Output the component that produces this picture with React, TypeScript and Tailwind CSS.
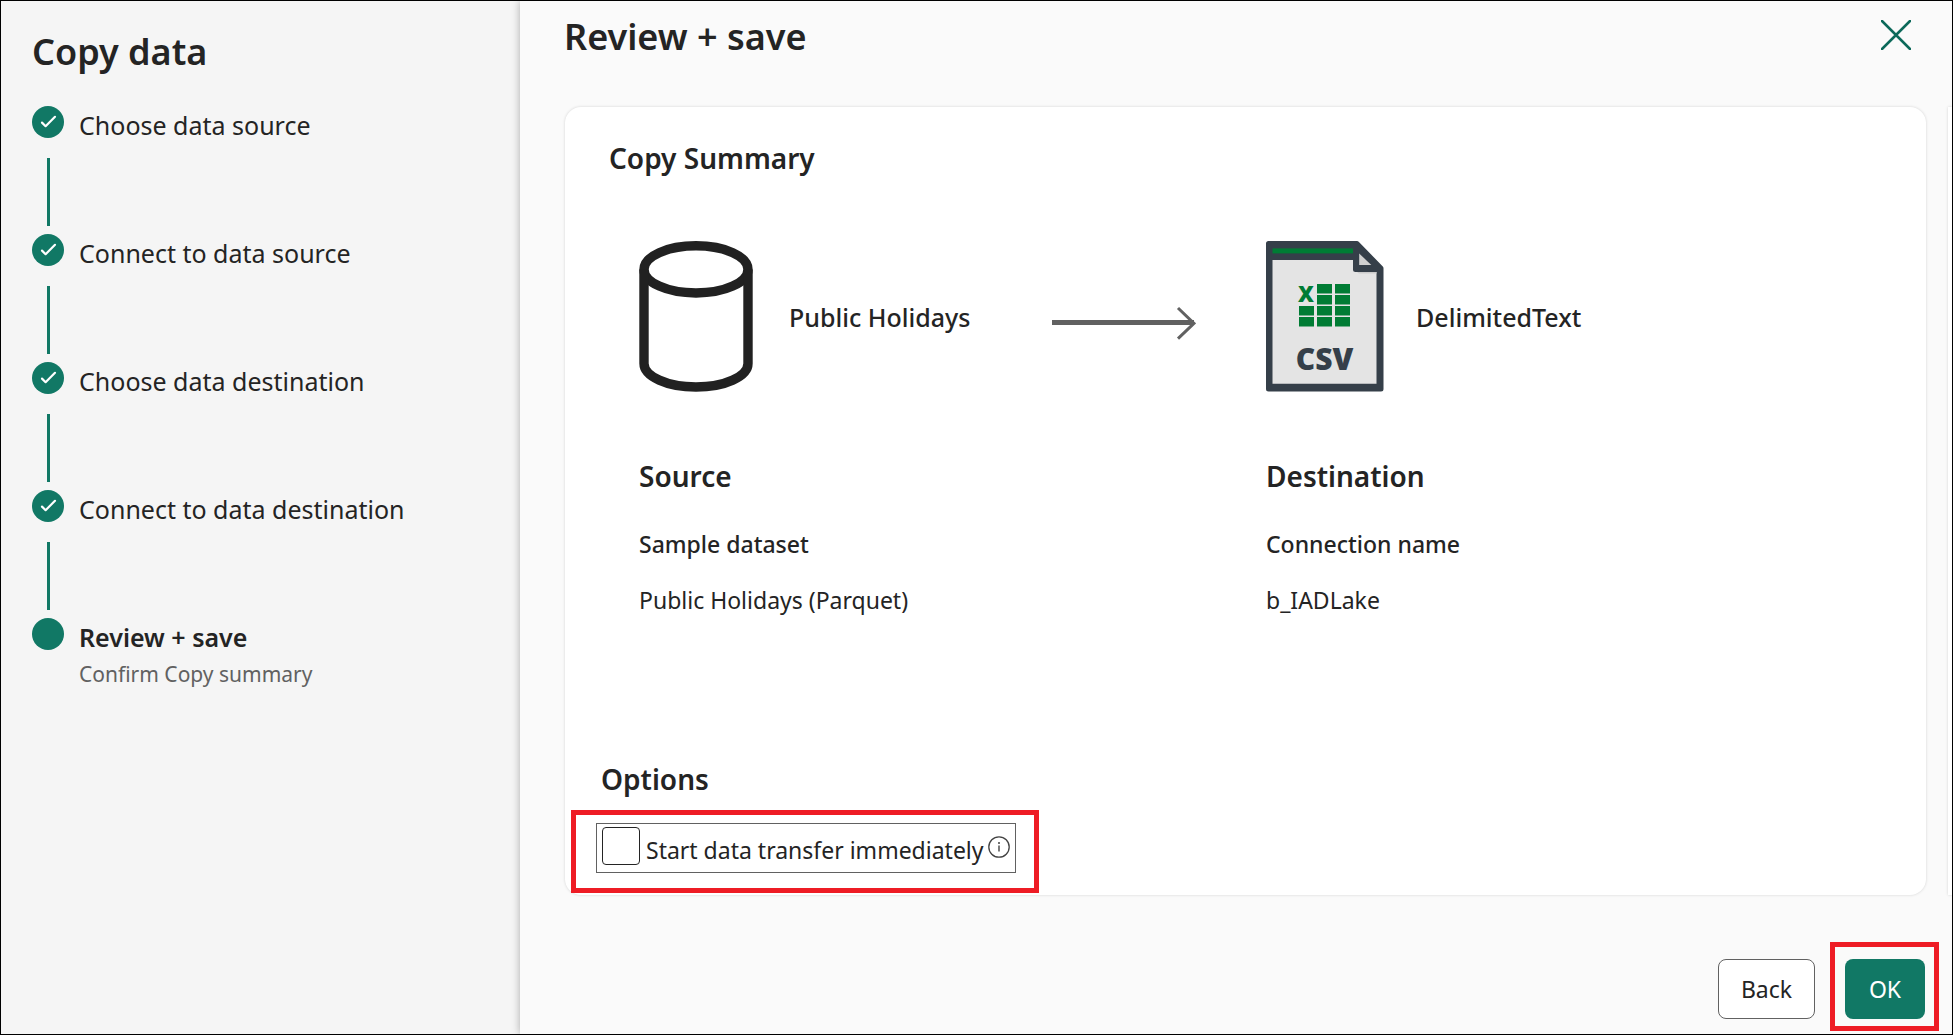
const completedSteps = [
  'Choose data source',
  'Connect to data source',
  'Choose data destination',
  'Connect to data destination',
]

function CheckMark() {
  return (
    <svg viewBox="0 0 32 32" className="size-8" fill="none" aria-hidden="true">
      <path
        d="M10 16.6 L13.6 20.2 L23 10.8"
        stroke="white"
        strokeWidth="2.2"
        strokeLinecap="round"
        strokeLinejoin="round"
      />
    </svg>
  )
}

function DatabaseIcon() {
  return (
    <svg viewBox="0 0 118 151" className="h-[151px] w-[118px] shrink-0" fill="none" aria-hidden="true">
      <g stroke="#212121" strokeWidth="9.4">
        <ellipse cx="57" cy="28.4" rx="52" ry="23.6" />
        <path d="M5 28.4 V122.5 C5 135.5 28.3 146 57 146 S109 135.5 109 122.5 V28.4" />
      </g>
    </svg>
  )
}

function ArrowIcon() {
  return (
    <svg viewBox="0 0 144 47" className="h-[47px] w-36 shrink-0" fill="none" aria-hidden="true">
      <path d="M0 29.5 H142" stroke="#616161" strokeWidth="5" />
      <path d="M126 15 L142 30.3 L126 45.6" stroke="#616161" strokeWidth="3" />
    </svg>
  )
}

const sheetCells = [
  [51, 43], [69, 43],
  [51, 54], [69, 54],
  [33, 65], [51, 65], [69, 65],
  [33, 76], [51, 76], [69, 76],
]

function CsvIcon() {
  return (
    <svg viewBox="0 0 118 151" className="h-[151px] w-[118px] shrink-0" role="img" aria-label="CSV file">
      <path
        d="M2.5 0 H91 Q92 0 92.7 0.8 L116.8 25.4 Q117.5 26.2 117.5 27.2 V148 Q117.5 150.5 115 150.5 H2.5 Q0 150.5 0 148 V2.5 Q0 0 2.5 0 Z"
        fill="#353f49"
      />
      <path d="M6.5 19 H87 V28.5 Q87 31 89.5 31 H110.5 V142.8 H6.5 Z" fill="#e4e4e4" />
      <path d="M93.2 12.5 V24 H105.3 Z" fill="#d0d0d0" />
      <path d="M91 31 H110.5 V32.4 H93 Z" fill="#cbcbcb" />
      <rect x="6.5" y="7.4" width="80.5" height="5" fill="#007c34" />
      {sheetCells.map(([x, y]) => (
        <rect key={`${x}-${y}`} x={x} y={y} width="15" height="9.5" fill="#007c34" />
      ))}
      <text
        x="40"
        y="60.5"
        textAnchor="middle"
        fill="#007c34"
        className="font-['Open_Sans',sans-serif] text-[22px] font-extrabold"
      >
        X
      </text>
      <text
        x="58.5"
        y="128.5"
        textAnchor="middle"
        fill="#353f49"
        className="font-['Open_Sans',sans-serif] text-[30px] font-extrabold"
      >
        CSV
      </text>
    </svg>
  )
}

function InfoIcon() {
  return (
    <svg viewBox="0 0 22 22" className="size-[22px] shrink-0" fill="none" aria-hidden="true">
      <circle cx="11" cy="11" r="10.2" stroke="#424242" strokeWidth="1.3" />
      <path d="M11 9.5 V15.5" stroke="#424242" strokeWidth="1.4" />
      <circle cx="11" cy="7" r="1" fill="#424242" />
    </svg>
  )
}

function Details({ title, label, value }: { title: string; label: string; value: string }) {
  return (
    <div className="mt-16">
      <h3 className="text-[28px] leading-10 font-semibold">{title}</h3>
      <p className="mt-8 text-[23px] leading-8 font-medium">{label}</p>
      <p className="mt-6 text-[23px] leading-8">{value}</p>
    </div>
  )
}

function Sidebar() {
  return (
    <aside className="w-[519px] shrink-0 bg-[#f5f5f5] pt-[27px] pl-[31px]">
      <h1 className="mb-[30px] text-[36px] leading-[48px] font-semibold">Copy data</h1>
      <ol>
        {completedSteps.map((step) => (
          <li key={step} className="flex items-start gap-[15px]">
            <div className="w-8">
              <div className="size-8 rounded-full bg-[#117865]">
                <CheckMark />
              </div>
              <div className="mt-5 mb-2 ml-[15px] h-17 w-[3px] bg-[#117865]" />
            </div>
            <span className="mt-px text-[25px] leading-9">{step}</span>
          </li>
        ))}
        <li className="flex items-start gap-[15px]" aria-current="step">
          <div className="size-8 rounded-full bg-[#117865]" />
          <div className="mt-px">
            <p className="text-[25px] leading-9 font-semibold">Review + save</p>
            <p className="mt-1 text-[21px] leading-[30px] text-[#616161]">Confirm Copy summary</p>
          </div>
        </li>
      </ol>
    </aside>
  )
}

function Summary() {
  return (
    <section className="flex-1 rounded-2xl bg-white pt-[31px] pb-[22px] shadow-[0_0_3px_rgba(0,0,0,0.16)]">
      <h2 className="pl-11 text-[28px] leading-10 font-semibold">Copy Summary</h2>

      <div className="mt-[63px] grid grid-cols-2 pr-[33px] pl-[74px]">
        <div>
          <div className="flex items-center">
            <DatabaseIcon />
            <span className="ml-8 text-[25px] leading-9 font-medium whitespace-nowrap">
              Public Holidays
            </span>
            <div className="ml-[82px]">
              <ArrowIcon />
            </div>
          </div>
          <Details title="Source" label="Sample dataset" value="Public Holidays (Parquet)" />
        </div>
        <div>
          <div className="flex items-center">
            <CsvIcon />
            <span className="ml-8 text-[25px] leading-9 font-medium">DelimitedText</span>
          </div>
          <Details title="Destination" label="Connection name" value="b_IADLake" />
        </div>
      </div>

      <h3 className="mt-[143px] pl-9 text-[28px] leading-10 font-semibold">Options</h3>
      <div className="relative mt-6 ml-[31px] w-fit">
        <div className="flex h-[50px] items-start border border-[#616161] px-[5px]">
          <input
            id="start-transfer"
            type="checkbox"
            className="mt-[3px] size-[38px] appearance-none rounded-[4px] border border-[#242424] bg-white checked:bg-[#117865]"
          />
          <label htmlFor="start-transfer" className="mt-[10px] ml-[6px] text-[23px] leading-8 whitespace-nowrap">
            Start data transfer immediately
          </label>
          <button type="button" aria-label="More information" className="mt-3 ml-1">
            <InfoIcon />
          </button>
        </div>
        <div className="pointer-events-none absolute -top-[13px] -right-[23px] -bottom-5 -left-[25px] border-5 border-[#ee1c25]" />
      </div>
    </section>
  )
}

export default function App() {
  return (
    <div className="flex min-h-screen border border-black bg-[#fafafa] font-['Noto_Sans',sans-serif] text-[#242424]">
      <Sidebar />
      <main className="relative flex min-w-0 flex-1 flex-col bg-[#fafafa] shadow-[0_0_8px_rgba(0,0,0,0.3)]">
        <header className="flex items-start justify-between pt-3 pr-[41px] pb-[46px] pl-11">
          <h2 className="text-[36px] leading-[48px] font-semibold">Review + save</h2>
          <button type="button" aria-label="Close" className="mt-[7px]">
            <svg viewBox="0 0 30 30" className="size-[30px]" fill="none" aria-hidden="true">
              <path d="M1 1 L29 29 M29 1 L1 29" stroke="#0c695a" strokeWidth="2.5" strokeLinecap="round" />
            </svg>
          </button>
        </header>

        <div className="flex flex-1 gap-[22px] overflow-x-clip pl-[45px]">
          <Summary />
          <div className="w-1 bg-white shadow-[0_0_3px_rgba(0,0,0,0.16)]" />
        </div>

        <footer className="flex justify-end gap-[30px] pt-16 pr-[27px] pb-[15px] text-[23px] leading-8">
          <button type="button" className="h-15 w-[97px] rounded-lg border border-[#616161] bg-white">
            Back
          </button>
          <div className="relative">
            <button type="button" className="h-15 w-20 rounded-lg bg-[#117865] text-white">
              OK
            </button>
            <div className="pointer-events-none absolute -top-[17px] -right-[14px] -bottom-3 -left-[15px] border-5 border-[#ee1c25]" />
          </div>
        </footer>
      </main>
    </div>
  )
}
